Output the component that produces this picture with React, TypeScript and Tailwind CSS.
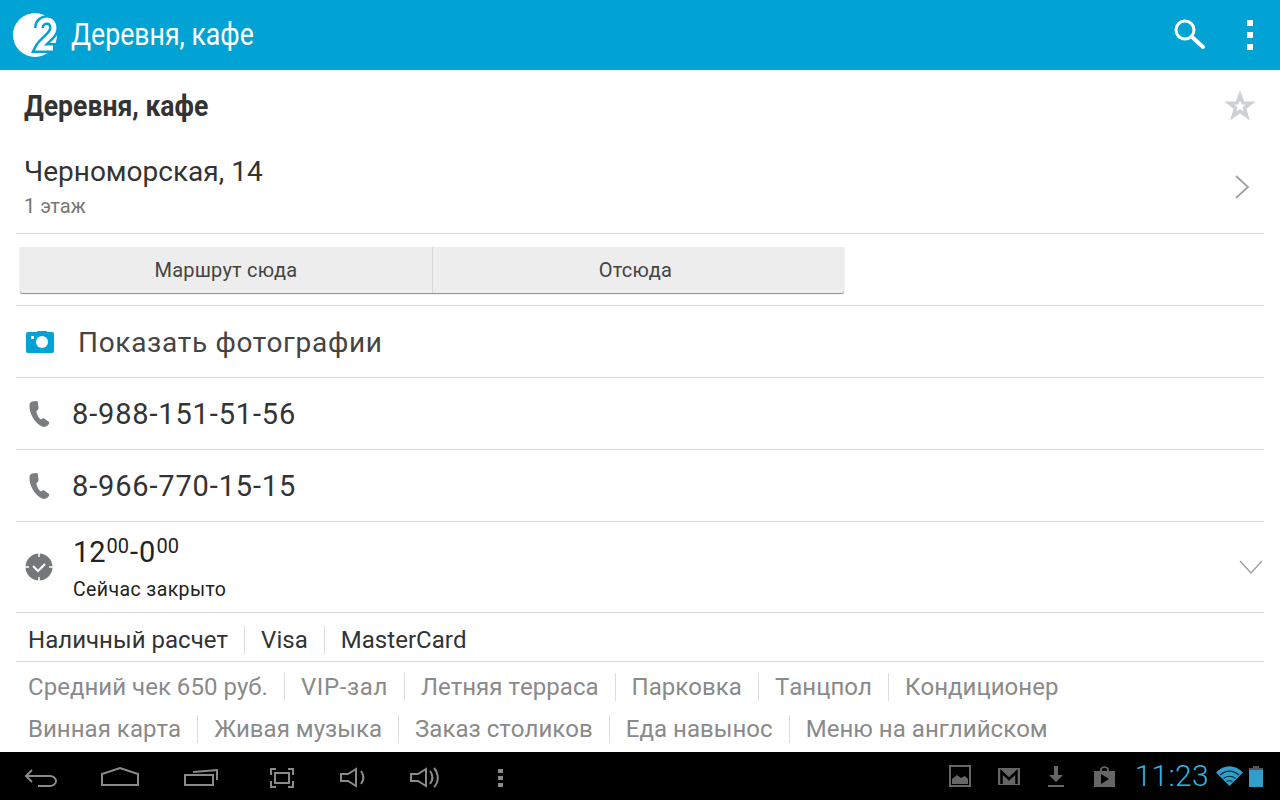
const stroke = { fill: 'none', stroke: '#8a8a8a', strokeWidth: 2 }

function Logo() {
  return (
    <svg width="44" height="44" viewBox="0 0 44 44" className="shrink-0">
      <circle cx="22" cy="22" r="22" fill="#fff" />
      <path d="M26 15C26 9 31 7 34 7 38 7 41 10 41 15 41 23 30 27 26 35H44" fill="none" stroke="#00a3d3" strokeWidth="10" />
      <path d="M26 15C26 9 31 7 34 7 38 7 41 10 41 15 41 23 30 27 26 35H40" fill="none" stroke="#fff" strokeWidth="5" />
    </svg>
  )
}

function Phone() {
  return (
    <svg width="24" height="28" viewBox="0 0 24 28" className="shrink-0">
      <path d="M4 1.500 L8.500 1 C9.500 1 10 2 10 3 L10.500 8.500 C10.500 9.500 9.500 10 8.500 11 C8.500 14 10.500 18 13 19.500 C14 19 15 18 16 18.500 L20.500 21.500 C21.500 22.500 21.500 23.500 20.500 24.500 C19 26.500 16.500 27.500 14 26.500 C7 23 1 14 1.500 5 C1.500 3.500 2.500 2 4 1.500z" fill="#7a7d80" />
    </svg>
  )
}

function Row({ children, className = '' }: { children: React.ReactNode; className?: string }) {
  return <div className={`mx-4 flex items-center border-b border-[#d6d6d6] ${className}`}>{children}</div>
}

function Chips({ items, color }: { items: string[]; color: string }) {
  return (
    <div className={`flex items-center text-[24px] leading-[28px] tracking-[0.03px] [font-kerning:none] ${color}`}>
      {items.map((t, i) => (
        <span key={t} className={`whitespace-nowrap ${i ? 'ml-4 border-l border-[#dcdcdc] pl-4' : ''} ${t === 'VIP-зал' ? 'tracking-[0.6px]' : ''}`}>{t}</span>
      ))}
    </div>
  )
}

function NavBar() {
  return (
    <div className="flex h-12 items-center bg-black">
      <svg width="530" height="48" viewBox="0 0 530 48" className="shrink-0">
        <path d="M26 24h24a6 5 0 0 1 6 5v0a6 5 0 0 1-6 5H38M32 18l-6 6 6 6" {...stroke} />
        <path d="M102 33V22l18-6 18 6v11z" {...stroke} />
        <path d="M185 23h28v10h-28zM193 20l24-2v10" {...stroke} />
        <path d="M275 21h14v10h-14zM271 23v-6h5M288 17h5v6M271 29v6h5M288 35h5v-6" {...stroke} />
        <path d="M341 22h7l8-5v17l-8-5h-7zM361 19c3 4 3 9 0 13" {...stroke} />
        <path d="M411 22h7l8-5v17l-8-5h-7zM430 19c3 4 3 9 0 13M434 16c5 6 5 14 0 19" {...stroke} />
        <path d="M498 17h5v4h-5zM498 24h5v4h-5zM498 31h5v4h-5z" fill="#8a8a8a" />
      </svg>
      <div className="mr-[17px] ml-auto flex items-center">
        <svg width="22" height="22" viewBox="0 0 22 22" className="shrink-0">
          <rect x="1" y="1" width="20" height="20" fill="none" stroke="#666" strokeWidth="2" />
          <path d="M3 19v-5l5-4 4 3 4-2 3 3v5z" fill="#666" />
        </svg>
        <svg width="22" height="17" viewBox="0 0 22 17" className="ml-[27px] shrink-0">
          <path d="M0 0h22v17H0z" fill="#666" />
          <path d="M3.500 16V4l7.500 7 7.500-7v12" fill="none" stroke="#000" strokeWidth="2.500" />
        </svg>
        <svg width="16" height="21" viewBox="0 0 16 21" className="ml-[28px] shrink-0">
          <path d="M6 0h4v9h5l-7 7-7-7h5zM0 19h16v2H0z" fill="#666" />
        </svg>
        <svg width="21" height="21" viewBox="0 0 21 21" className="ml-[30px] shrink-0">
          <path d="M0 5h6v-1c0-5 9-5 9 0v1h6v16H0zM8 5h5v-1c0-3-5-3-5 0z" fill="#666" fillRule="evenodd" />
          <path d="M7 8l8 5-8 5z" fill="#000" />
        </svg>
        <span className="ml-[20px] text-[30px] leading-none font-light tracking-[0.3px] text-[#33b5e5]">11:23</span>
        <svg width="27" height="20" viewBox="0 0 27 20" className="ml-[7px] shrink-0">
          <path d="M0 6.500C8-2 19-2 27 6.500L13.500 20z" fill="#2f9fc9" />
          <path d="M4 9c6-5 13-5 19 0M7.500 12.500c4-3 8-3 12 0M10.500 15.500c2-1 4-1 6 0" fill="none" stroke="#0b2c38" strokeWidth="1.200" />
        </svg>
        <svg width="14" height="21" viewBox="0 0 14 21" className="ml-[6px] shrink-0">
          <path d="M4 0h6v2h4v19H0V2h4z" fill="#2f9fc9" />
          <path d="M4 0h6v2h4v2H0V2h4z" fill="#555" />
        </svg>
      </div>
    </div>
  )
}

export default function App() {
  return (
    <div className="flex h-[800px] w-[1280px] flex-col overflow-hidden bg-white font-['Roboto',sans-serif] text-[#333]">
      <header className="flex h-[70px] shrink-0 items-center bg-[#00a3d3] pl-[13px] text-white">
        <Logo />
        <span className="ml-[14px] origin-left scale-x-[0.86] text-[31px] whitespace-nowrap">Деревня, кафе</span>
        <div className="ml-auto flex items-center">
          <svg width="34" height="32" viewBox="0 0 34 32" className="mr-[39px]">
            <circle cx="11" cy="11" r="9" fill="none" stroke="#fff" strokeWidth="3" />
            <path d="M18 18l11 10" stroke="#fff" strokeWidth="4" strokeLinecap="round" />
          </svg>
          <div className="mr-[27px] flex flex-col gap-[6px]">
            <div className="h-[6px] w-[6px] bg-white" />
            <div className="h-[6px] w-[6px] bg-white" />
            <div className="h-[6px] w-[6px] bg-white" />
          </div>
        </div>
      </header>

      <main className="flex min-h-0 flex-1 flex-col">
        <div className="flex h-[72px] items-center justify-between px-[24px]">
          <span className="-mt-[2px] origin-left scale-x-[0.885] text-[30px] font-bold whitespace-nowrap">Деревня, кафе</span>
          <svg width="32" height="32" viewBox="0 0 32 32" className="-mt-[2px]">
            <path d="M16 1l4.200 11.500h11.500l-9.300 7.200 3.500 11.800-9.900-7-9.900 7 3.500-11.800-9.300-7.200h11.500z" fill="#ccd1d5" />
            <path d="M16 11.500l1.500 4h4.300l-3.400 2.700 1.200 4.300-3.600-2.500-3.600 2.500 1.200-4.300-3.400-2.700h4.300z" fill="#fff" />
          </svg>
        </div>

        <Row className="h-[92px] justify-between">
          <div className="-mt-[3px] pl-2">
            <div className="text-[28px] leading-[36px]">Черноморская, 14</div>
            <div className="mt-[4px] text-[20px] leading-[24px] text-[#777]">1 этаж</div>
          </div>
          <svg width="16" height="26" viewBox="0 0 16 26" className="mr-[14px] -mt-[2px]">
            <path d="M2 2l12 11L2 24" fill="none" stroke="#a0a0a0" strokeWidth="1.800" />
          </svg>
        </Row>

        <Row className="h-[72px] pl-1">
          <div className="mt-[1px] flex h-[46px] w-[824px] rounded-[2px] bg-[#ededed] text-[20px] tracking-[0.2px] text-[#444] shadow-[0_1px_1px_#8a8a8a]">
            <div className="flex w-[413px] items-center justify-center border-r border-[#d8d8d8]">Маршрут сюда</div>
            <div className="flex flex-1 items-center justify-center pr-[6px]">Отсюда</div>
          </div>
        </Row>

        <Row className="h-[72px] pl-[10px]">
          <svg width="28" height="24" viewBox="0 0 28 24" className="shrink-0">
            <path d="M2 2h8l2-1h8l2 1h4a2 2 0 0 1 2 2v17a2 2 0 0 1-2 2H2a2 2 0 0 1-2-2V4a2 2 0 0 1 2-2z" fill="#00a3d3" />
            <circle cx="16" cy="12" r="6" fill="#fff" />
            <rect x="5" y="6" width="3" height="3" fill="#fff" />
          </svg>
          <span className="ml-[24px] pt-[2px] text-[28px] tracking-[0.7px] text-[#444]">Показать фотографии</span>
        </Row>

        {['8-988-151-51-56', '8-966-770-15-15'].map(p => (
          <Row key={p} className="h-[72px] pl-[12px]">
            <Phone />
            <span className="ml-[20px] pt-[2px] text-[29px] tracking-[0.85px]">{p}</span>
          </Row>
        ))}

        <Row className="h-[91px] justify-between pl-[9px]">
          <svg width="28" height="28" viewBox="0 0 28 28" className="shrink-0">
            <circle cx="14" cy="14" r="13.500" fill="#75787b" />
            <path d="M8 13l5 5 7-7" fill="none" stroke="#fff" strokeWidth="2" />
            <path d="M14 0v4M14 24v4M0 14h4M24 14h4" stroke="#fff" strokeWidth="1.500" />
          </svg>
          <div className="ml-[20px] flex-1 pt-[2px]">
            <div className="text-[29px] leading-[36px] text-[#222]">12<span className="ml-[1px] align-[9px] text-[20px] leading-none">00</span><span className="mx-[1px]">-</span>0<span className="ml-[1px] align-[9px] text-[20px] leading-none">00</span></div>
            <div className="mt-[8px] text-[19.500px] leading-[24px] tracking-[0.4px] text-[#222]">Сейчас закрыто</div>
          </div>
          <svg width="26" height="16" viewBox="0 0 26 16" className="-mt-[1px] shrink-0">
            <path d="M2 2l11 12L24 2" fill="none" stroke="#a0a0a0" strokeWidth="1.500" />
          </svg>
        </Row>

        <Row className="h-[49px] pt-[5px] pl-3">
          <Chips items={['Наличный расчет', 'Visa', 'MasterCard']} color="text-[#333]" />
        </Row>

        <div className="mx-4 flex flex-col gap-[14px] pt-[11px] pl-3">
          <Chips items={['Средний чек 650 руб.', 'VIP-зал', 'Летняя терраса', 'Парковка', 'Танцпол', 'Кондиционер']} color="text-[#8a8a8a]" />
          <Chips items={['Винная карта', 'Живая музыка', 'Заказ столиков', 'Еда навынос', 'Меню на английском']} color="text-[#8a8a8a]" />
        </div>
      </main>

      <NavBar />
    </div>
  )
}
